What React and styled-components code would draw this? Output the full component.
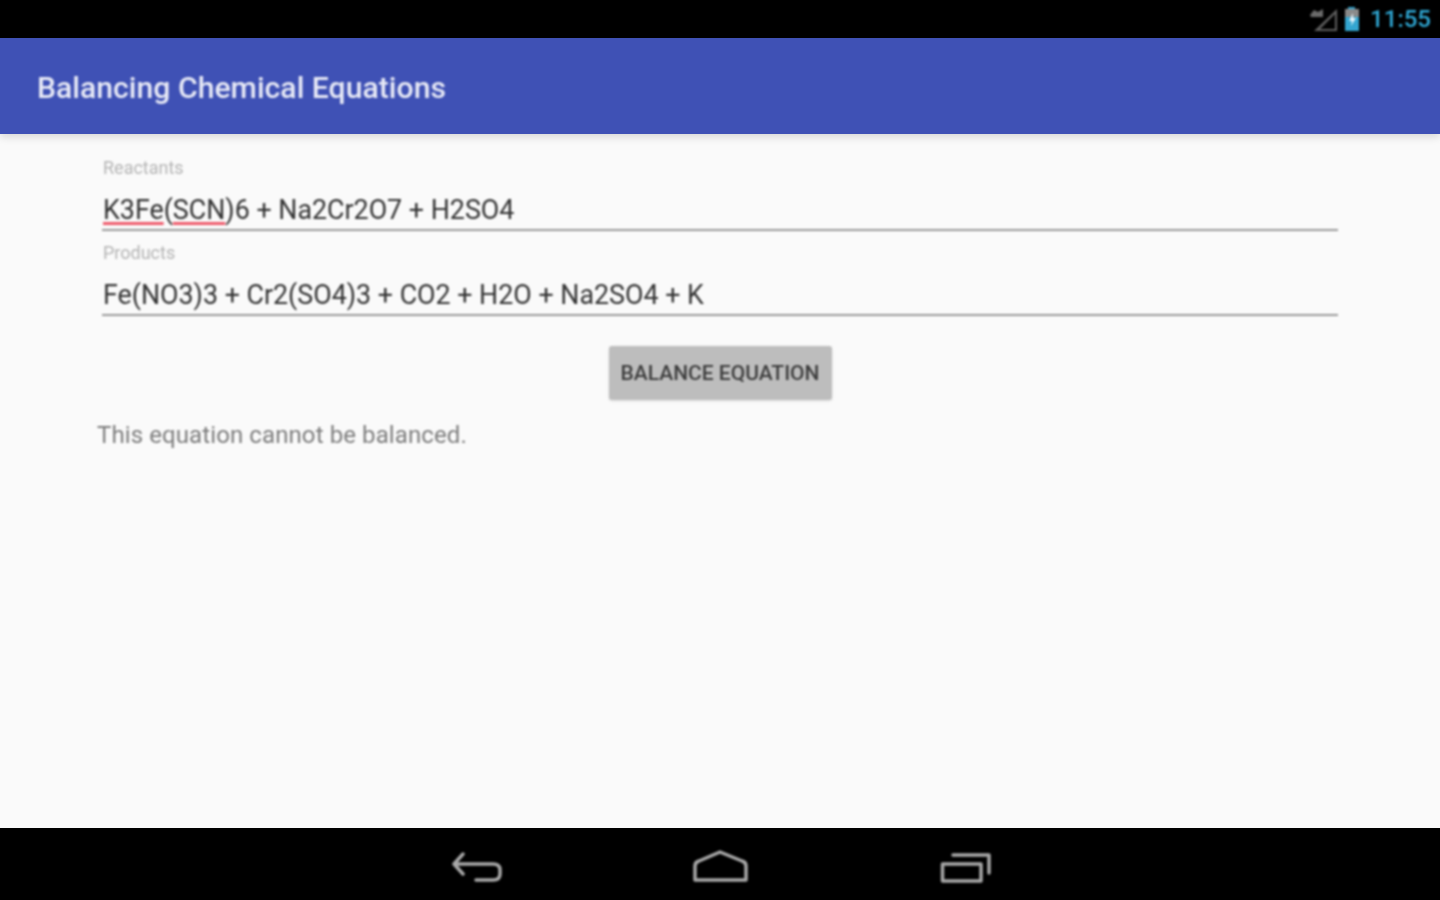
import styled, { createGlobalStyle, css } from 'styled-components';

const GlobalStyle = createGlobalStyle`
  html, body {
    margin: 0;
    height: 100%;
    background: #000;
    font-family: Roboto, "Liberation Sans", sans-serif;
  }
`;

// the reference is an upscaled low-res capture, so text and icons are a little soft
const soft = css`
  filter: blur(0.8px);
`;

const Screen = styled.div`
  width: 1440px;
  height: 900px;
  display: flex;
  flex-direction: column;
  overflow: hidden;
  background: #fafafa;
`;

const StatusBar = styled.div`
  height: 38px;
  flex: none;
  background: #000;
  display: flex;
  justify-content: flex-end;
`;

const StatusIcons = styled.div`
  ${soft}
  display: flex;
  align-items: center;
  padding-right: 9px;
  gap: 6px;
`;

const Clock = styled.span`
  color: #2fa8d5;
  font-size: 24px;
  font-weight: 500;
  line-height: 38px;
  margin-left: 3px;
`;

const AppBar = styled.header`
  box-sizing: border-box;
  height: 96px;
  flex: none;
  background: #3f51b5;
  box-shadow: 0 3px 8px rgba(0, 0, 0, 0.14);
  display: flex;
  align-items: center;
  padding: 2px 37px 0;
  position: relative;
  z-index: 1;
`;

const AppTitle = styled.h1`
  ${soft}
  margin: 0;
  color: #e8eaf6;
  font-size: 30.2px;
  font-weight: 500;
`;

const Content = styled.main`
  ${soft}
  flex: 1;
  padding: 24px 102px 0;
`;

const Field = styled.div`
  height: 85px;
`;

const FieldLabel = styled.div`
  color: #b4b4b4;
  font-size: 18px;
  line-height: 20px;
  padding-left: 1px;
`;

const FieldValue = styled.div`
  box-sizing: border-box;
  margin-top: 12px;
  height: 41px;
  padding: 3px 0 0 1px;
  border-bottom: 2px solid #9a9a9a;
  color: #333;
  font-size: 26.82px;
  line-height: 34px;
  white-space: nowrap;
`;

const Misspelled = styled.span`
  text-decoration: underline;
  text-decoration-color: #ef5b6c;
  text-decoration-thickness: 3px;
  text-underline-offset: 3px;
`;

const ButtonRow = styled.div`
  display: flex;
  justify-content: center;
  margin-top: 18px;
`;

const BalanceButton = styled.button`
  width: 223px;
  height: 54px;
  border: none;
  border-radius: 3px;
  padding: 0;
  background: #bdbdbd;
  box-shadow: 0 1px 3px rgba(0, 0, 0, 0.12);
  color: #3c3c3c;
  font-family: inherit;
  font-size: 21px;
  font-weight: 500;
  white-space: nowrap;
`;

const ResultText = styled.p`
  margin: 20px 0 0 -5px;
  color: #7c7c7c;
  font-size: 24px;
  line-height: 30px;
  letter-spacing: 0.1px;
`;

const NavBar = styled.nav`
  box-sizing: border-box;
  height: 72px;
  flex: none;
  background: #000;
  display: flex;
  align-items: center;
  justify-content: center;
  gap: 190px;
  padding-top: 4px;
`;

const NavIcon = styled.svg`
  ${soft}
  fill: none;
  stroke: #a8a8a8;
  stroke-width: 3.5;
  stroke-linejoin: round;
  stroke-linecap: round;
  display: block;
  overflow: visible;
`;

function App() {
  return (
    <>
      <GlobalStyle />
      <Screen>
        <StatusBar>
          <StatusIcons>
            <svg width="30" height="28" viewBox="0 0 30 28">
              <path d="M7 26 L30 4 V26 Z M13 24 H28 V9 Z" fill="#5f5f5f" fillRule="evenodd" />
              <path d="M3 10 L7 5 L11 7 L16 4 V12 H4 Z" fill="#6a6a6a" />
            </svg>
            <svg width="18" height="26" viewBox="0 0 18 26">
              <path d="M5 1 H12 V3 H16 V25 H2 V3 H5 Z" fill="#33a5d0" />
              <path d="M2 3 H16 V11 H2 Z" fill="#8a8a8a" />
              <path d="M10 7 L6 15 H9 L8 20 L13 12 H10 Z" fill="#e8f4fa" />
            </svg>
            <Clock>11:55</Clock>
          </StatusIcons>
        </StatusBar>
        <AppBar>
          <AppTitle>Balancing Chemical Equations</AppTitle>
        </AppBar>
        <Content>
          <Field>
            <FieldLabel>Reactants</FieldLabel>
            <FieldValue>
              <Misspelled>K3Fe</Misspelled>(<Misspelled>SCN</Misspelled>)6 + Na2Cr2O7 + H2SO4
            </FieldValue>
          </Field>
          <Field>
            <FieldLabel>Products</FieldLabel>
            <FieldValue>Fe(NO3)3 + Cr2(SO4)3 + CO2 + H2O + Na2SO4 + K</FieldValue>
          </Field>
          <ButtonRow>
            <BalanceButton>BALANCE EQUATION</BalanceButton>
          </ButtonRow>
          <ResultText>This equation cannot be balanced.</ResultText>
        </Content>
        <NavBar>
          <NavIcon width="52" height="32" viewBox="0 0 52 32">
            <path d="M13 4 L4 14 L13 24 M4 14 H43 Q50 14 50 20 V24 Q50 30 43 30 H26" />
          </NavIcon>
          <NavIcon width="56" height="32" viewBox="0 0 56 32">
            <path d="M28 2 L50 11 Q54 12 54 16 V30 H3 V16 Q3 12 7 11 Z" />
          </NavIcon>
          <NavIcon width="52" height="32" viewBox="0 0 52 32">
            <path d="M4.5 14 H43 V31 H4.5 Z M15 5 H51 V23" />
          </NavIcon>
        </NavBar>
      </Screen>
    </>
  );
}

export default App;
